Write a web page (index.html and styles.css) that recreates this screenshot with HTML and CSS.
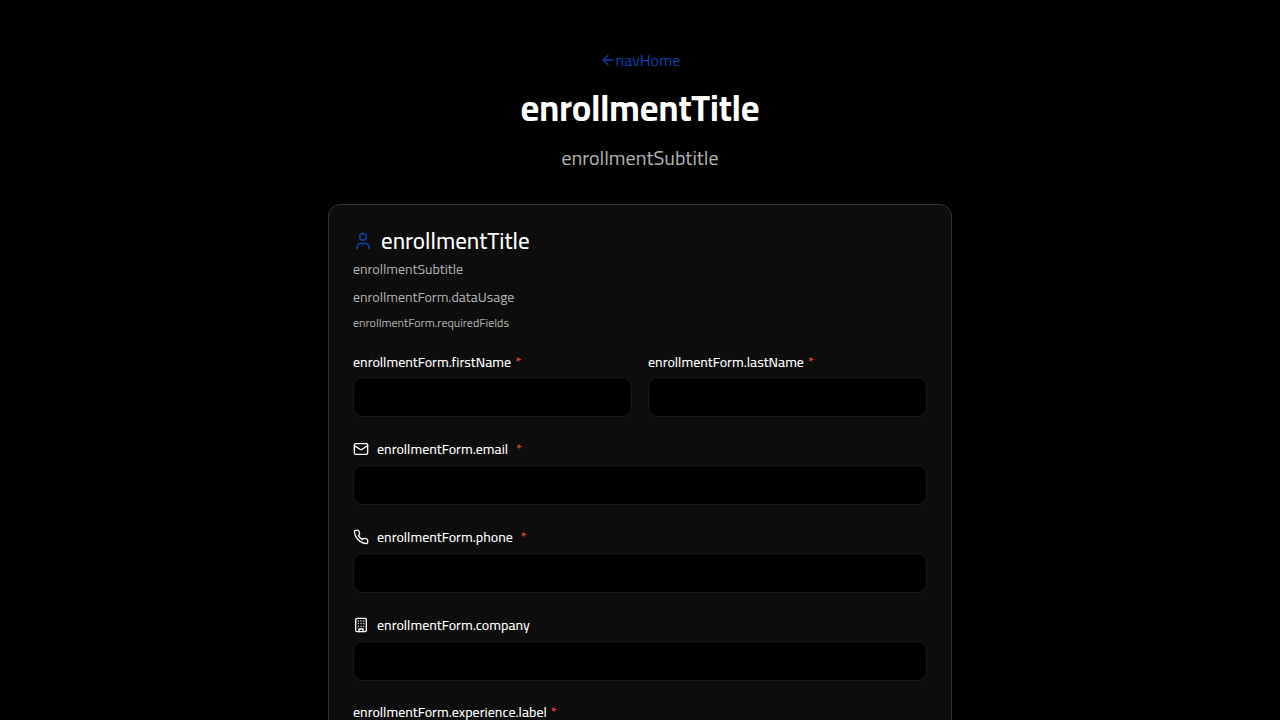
FILE: index.html
```html
<!DOCTYPE html>
<html lang="en">
<head>
<meta charset="utf-8">
<meta name="viewport" content="width=device-width, initial-scale=1">
<title>enrollmentTitle</title>
<link rel="stylesheet" href="styles.css">
</head>
<body>
<main class="page">
  <header class="intro">
    <a class="home-link" href="#"><svg class="icon" viewBox="0 0 24 24" aria-hidden="true"><path d="m12 19-7-7 7-7"/><path d="M19 12H5"/></svg>navHome</a>
    <h1 class="intro-title">enrollmentTitle</h1>
    <p class="intro-subtitle">enrollmentSubtitle</p>
  </header>
  <section class="card">
    <div class="card-header">
      <h2 class="card-title"><svg class="icon icon-user" viewBox="0 0 24 24" aria-hidden="true"><path d="M19 21v-2a4 4 0 0 0-4-4H9a4 4 0 0 0-4 4v2"/><circle cx="12" cy="7" r="4"/></svg>enrollmentTitle</h2>
      <p class="card-subtitle">enrollmentSubtitle</p>
      <p class="card-text">enrollmentForm.dataUsage</p>
      <p class="card-note">enrollmentForm.requiredFields</p>
    </div>
    <form class="form">
      <div class="row">
        <div class="field">
          <label class="label" for="first">enrollmentForm.firstName<span class="required">*</span></label>
          <input class="input" id="first" type="text" required>
        </div>
        <div class="field">
          <label class="label" for="last">enrollmentForm.lastName<span class="required">*</span></label>
          <input class="input" id="last" type="text" required>
        </div>
      </div>
      <div class="field">
        <label class="label label-icon" for="email"><svg class="icon" viewBox="0 0 24 24" aria-hidden="true"><rect width="20" height="16" x="2" y="4" rx="2"/><path d="m22 7-8.97 5.7a1.94 1.94 0 0 1-2.06 0L2 7"/></svg>enrollmentForm.email<span class="required">*</span></label>
        <input class="input" id="email" type="email" required>
      </div>
      <div class="field">
        <label class="label label-icon" for="phone"><svg class="icon" viewBox="0 0 24 24" aria-hidden="true"><path d="M22 16.92v3a2 2 0 0 1-2.18 2 19.79 19.79 0 0 1-8.63-3.07 19.5 19.5 0 0 1-6-6 19.79 19.79 0 0 1-3.07-8.67A2 2 0 0 1 4.11 2h3a2 2 0 0 1 2 1.72 12.84 12.84 0 0 0 .7 2.81 2 2 0 0 1-.45 2.11L8.09 9.91a16 16 0 0 0 6 6l1.27-1.27a2 2 0 0 1 2.11-.45 12.84 12.84 0 0 0 2.81.7A2 2 0 0 1 22 16.92z"/></svg>enrollmentForm.phone<span class="required">*</span></label>
        <input class="input" id="phone" type="tel" required>
      </div>
      <div class="field">
        <label class="label label-icon" for="company"><svg class="icon" viewBox="0 0 24 24" aria-hidden="true"><rect width="16" height="20" x="4" y="2" rx="2"/><path d="M9 22v-4h6v4M8 6h.01M16 6h.01M12 6h.01M12 10h.01M12 14h.01M16 10h.01M16 14h.01M8 10h.01M8 14h.01"/></svg>enrollmentForm.company</label>
        <input class="input" id="company" type="text">
      </div>
      <div class="field">
        <label class="label" for="experience">enrollmentForm.experience.label<span class="required">*</span></label>
        <select class="input" id="experience" required><option></option></select>
      </div>
    </form>
  </section>
</main>
</body>
</html>
```
FILE: styles.css
```css
*, *::before, *::after { box-sizing: border-box; }

html { scrollbar-width: none; }

body {
  margin: 0;
  background: #000;
  color: #fff;
  font: 16px/24px Cairo, "Titillium Web", "Noto Sans", sans-serif;
}

h1, h2, p { margin: 0; }

.page { max-width: 672px; margin: 0 auto; padding: 48px 24px; }

.icon {
  flex: none;
  width: 16px;
  height: 16px;
  fill: none;
  stroke: currentColor;
  stroke-width: 2;
  stroke-linecap: round;
  stroke-linejoin: round;
}

.intro {
  display: flex;
  flex-direction: column;
  align-items: center;
  gap: 16px;
  margin-bottom: 32px;
  text-align: center;
}
.home-link {
  display: inline-flex;
  align-items: center;
  color: #0f42ad;
  text-decoration: none;
}
.intro-title { font-size: 36px; font-weight: 700; line-height: 40px; }
.intro-subtitle { color: #b0b0b0; font-size: 20px; line-height: 28px; }

.card {
  padding: 24px;
  background: #0d0d0d;
  border: 1px solid #333;
  border-radius: 12px;
}
.card-header {
  display: flex;
  flex-direction: column;
  gap: 8px;
  padding-bottom: 24px;
  color: #b0b0b0;
  font-size: 14px;
  line-height: 20px;
}
.card-title {
  display: flex;
  align-items: center;
  gap: 8px;
  margin-bottom: -2px;
  color: #fff;
  font-size: 23px;
  font-weight: 500;
  line-height: 24px;
}
.icon-user { width: 20px; height: 20px; color: #0f42ad; }
.card-note { font-size: 12px; line-height: 16px; }

.form { display: grid; gap: 24px; }
.row { display: grid; grid-template-columns: 1fr 1fr; gap: 16px; }
.field { display: grid; gap: 8px; }
.label {
  display: flex;
  align-items: center;
  gap: 4px;
  font-size: 14px;
  font-weight: 500;
  line-height: 14px;
}
.label-icon { gap: 8px; line-height: 16px; }
.required { color: #ef4444; }
.input {
  width: 100%;
  height: 40px;
  padding: 8px 12px;
  background: #000;
  border: 1px solid #1a1a1a;
  border-radius: 10px;
  color: #fff;
  font: inherit;
}
```
